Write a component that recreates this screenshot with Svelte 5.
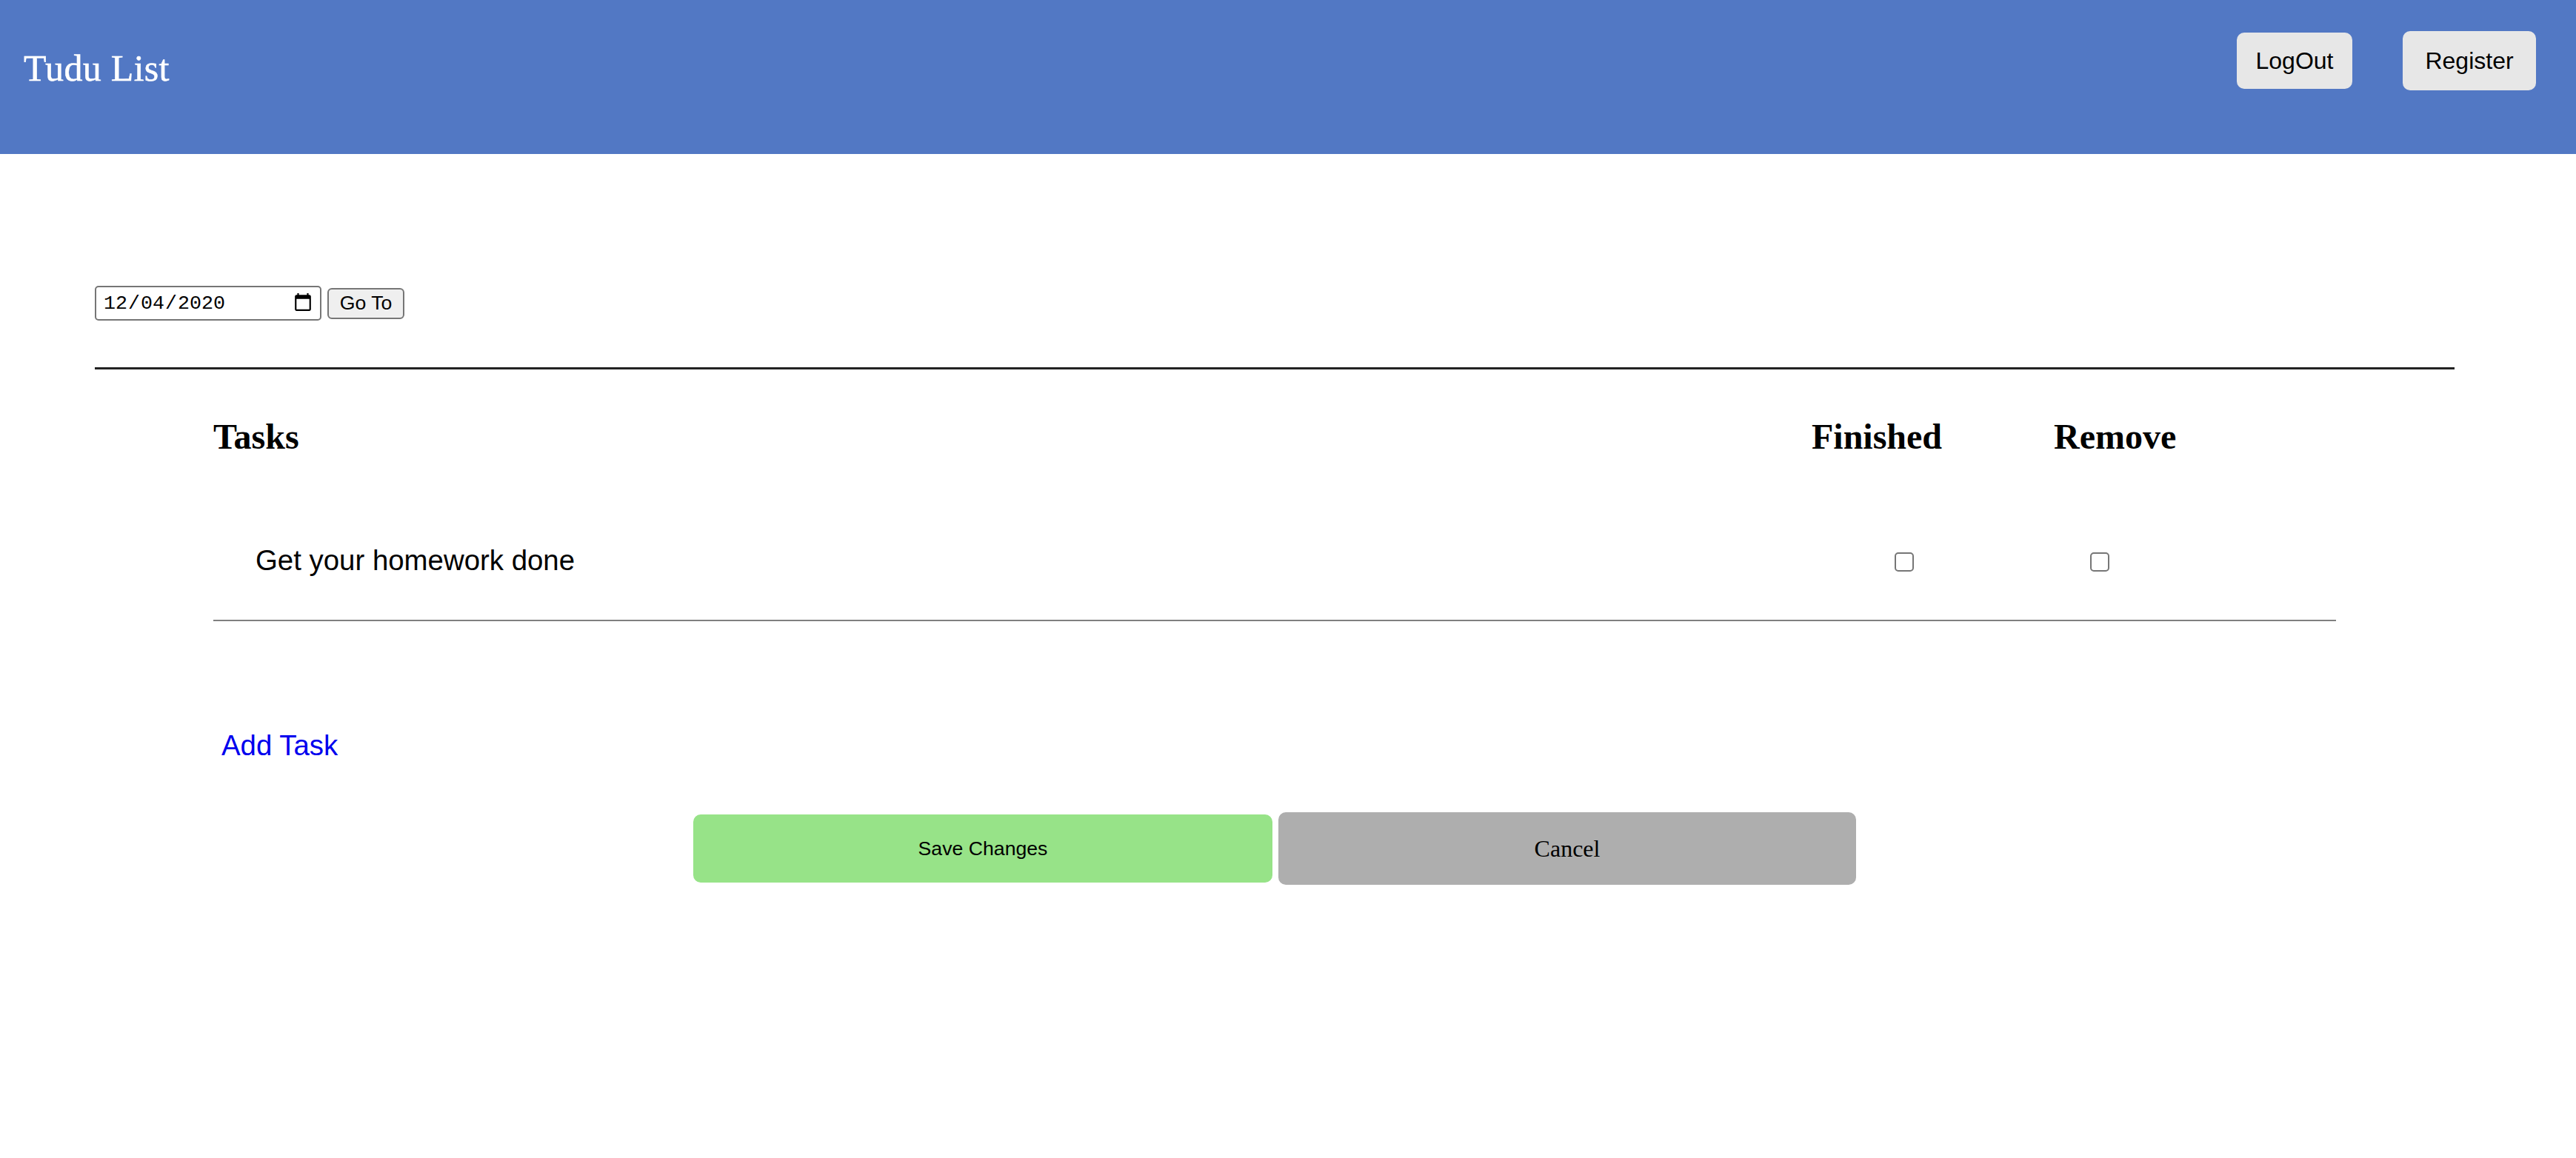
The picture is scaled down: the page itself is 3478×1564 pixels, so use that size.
<script>
  let tasks = [{ name: 'Get your homework done', finished: false, remove: false }];
  let date = '2020-12-04';
</script>

<header>
  <div class="logo">Tudu List</div>
  <nav>
    <button class="logout">LogOut</button>
    <button class="register">Register</button>
  </nav>
</header>

<main>
  <form class="date-row" on:submit|preventDefault>
    <input type="date" bind:value={date} />
    <button class="go">Go To</button>
  </form>
  <hr class="top-rule" />

  <section>
    <div class="heads">
      <h2>Tasks</h2>
      <h2>Finished</h2>
      <h2>Remove</h2>
    </div>

    {#each tasks as task}
      <div class="task">
        <span class="name">{task.name}</span>
        <input type="checkbox" bind:checked={task.finished} />
        <input type="checkbox" bind:checked={task.remove} />
      </div>
    {/each}
    <hr class="task-rule" />

    <a class="add" href="#add">Add Task</a>

    <div class="actions">
      <button class="save">Save Changes</button>
      <button class="cancel">Cancel</button>
    </div>
  </section>
</main>

<style>
  :global(body) {
    background: #fff;
    color: #000;
  }

  header {
    height: 208px;
    background: #5278c4;
    display: flex;
    justify-content: space-between;
    align-items: flex-start;
    padding: 0 54px 0 32px;
    box-sizing: border-box;
  }

  .logo {
    font-family: "Liberation Serif", serif;
    font-size: 50px;
    letter-spacing: 0.3px;
    color: #fff;
    margin-top: 62px;
    line-height: 60px;
    -webkit-text-stroke: 0.5px #fff;
  }

  nav {
    display: flex;
    align-items: center;
    gap: 68px;
    margin-top: 42px;
  }

  nav button {
    background: #e7e7e7;
    border: none;
    border-radius: 10px;
    font-family: "Liberation Sans", sans-serif;
    font-size: 32px;
    color: #000;
    padding: 0;
  }

  .logout {
    width: 156px;
    height: 76px;
  }

  .register {
    width: 180px;
    height: 80px;
  }

  main {
    padding: 178px 164px 0 128px;
  }

  .date-row {
    display: flex;
    align-items: center;
    gap: 8px;
  }

  input[type="date"] {
    width: 306px;
    height: 47px;
    box-sizing: border-box;
    border: 2px solid #767676;
    border-radius: 5px;
    background: #fff;
    font-family: "Liberation Mono", monospace;
    font-size: 26.67px;
    padding: 2px 9px;
    color: #000;
    margin: 0;
  }

  input[type="date"]::-webkit-calendar-picker-indicator {
    width: 28px;
    height: 30px;
    padding: 0;
    margin: 0;
    background-size: contain;
  }

  .go {
    width: 104px;
    height: 42px;
    box-sizing: border-box;
    background: #efefef;
    border: 2px solid #767676;
    border-radius: 6px;
    font-family: "Liberation Sans", sans-serif;
    font-size: 26.67px;
    color: #000;
    padding: 0;
  }

  hr {
    border: none;
    margin: 0;
  }

  .top-rule {
    height: 3px;
    background: #222;
    margin-top: 63px;
  }

  section {
    padding: 0 160px;
  }

  .heads {
    display: grid;
    grid-template-columns: 2158px 327px auto;
    margin-top: 63px;
  }

  h2 {
    margin: 0;
    font-family: "Liberation Serif", serif;
    font-size: 48px;
    font-weight: bold;
    line-height: 56px;
  }

  .task {
    display: grid;
    grid-template-columns: 2270px 264px auto;
    align-items: center;
    height: 60px;
    margin-top: 111px;
  }

  .name {
    padding-left: 57px;
    margin-bottom: 4px;
    font-family: "Liberation Sans", sans-serif;
    font-size: 38.4px;
  }

  input[type="checkbox"] {
    appearance: none;
    width: 26px;
    height: 26px;
    margin: 0;
    box-sizing: border-box;
    border: 2px solid #767676;
    border-radius: 5px;
    background: #fff;
  }

  .task-rule {
    height: 2px;
    background: #808080;
    margin-top: 48px;
  }

  .add {
    display: inline-block;
    margin: 146px 0 0 11px;
    font-family: "Liberation Sans", sans-serif;
    font-size: 38.4px;
    color: #0000ee;
    text-decoration: none;
  }

  .actions {
    display: flex;
    align-items: center;
    justify-content: flex-start;
    gap: 8px;
    margin: 68px 0 0 648px;
  }

  .actions button {
    border: none;
    border-radius: 10px;
    color: #000;
    padding: 0;
  }

  .save {
    width: 782px;
    height: 92px;
    background: #97e388;
    font-family: "Liberation Sans", sans-serif;
    font-size: 26.67px;
  }

  .cancel {
    width: 780px;
    height: 98px;
    background: #aeaeae;
    font-family: "Liberation Serif", serif;
    font-size: 32px;
  }
</style>
